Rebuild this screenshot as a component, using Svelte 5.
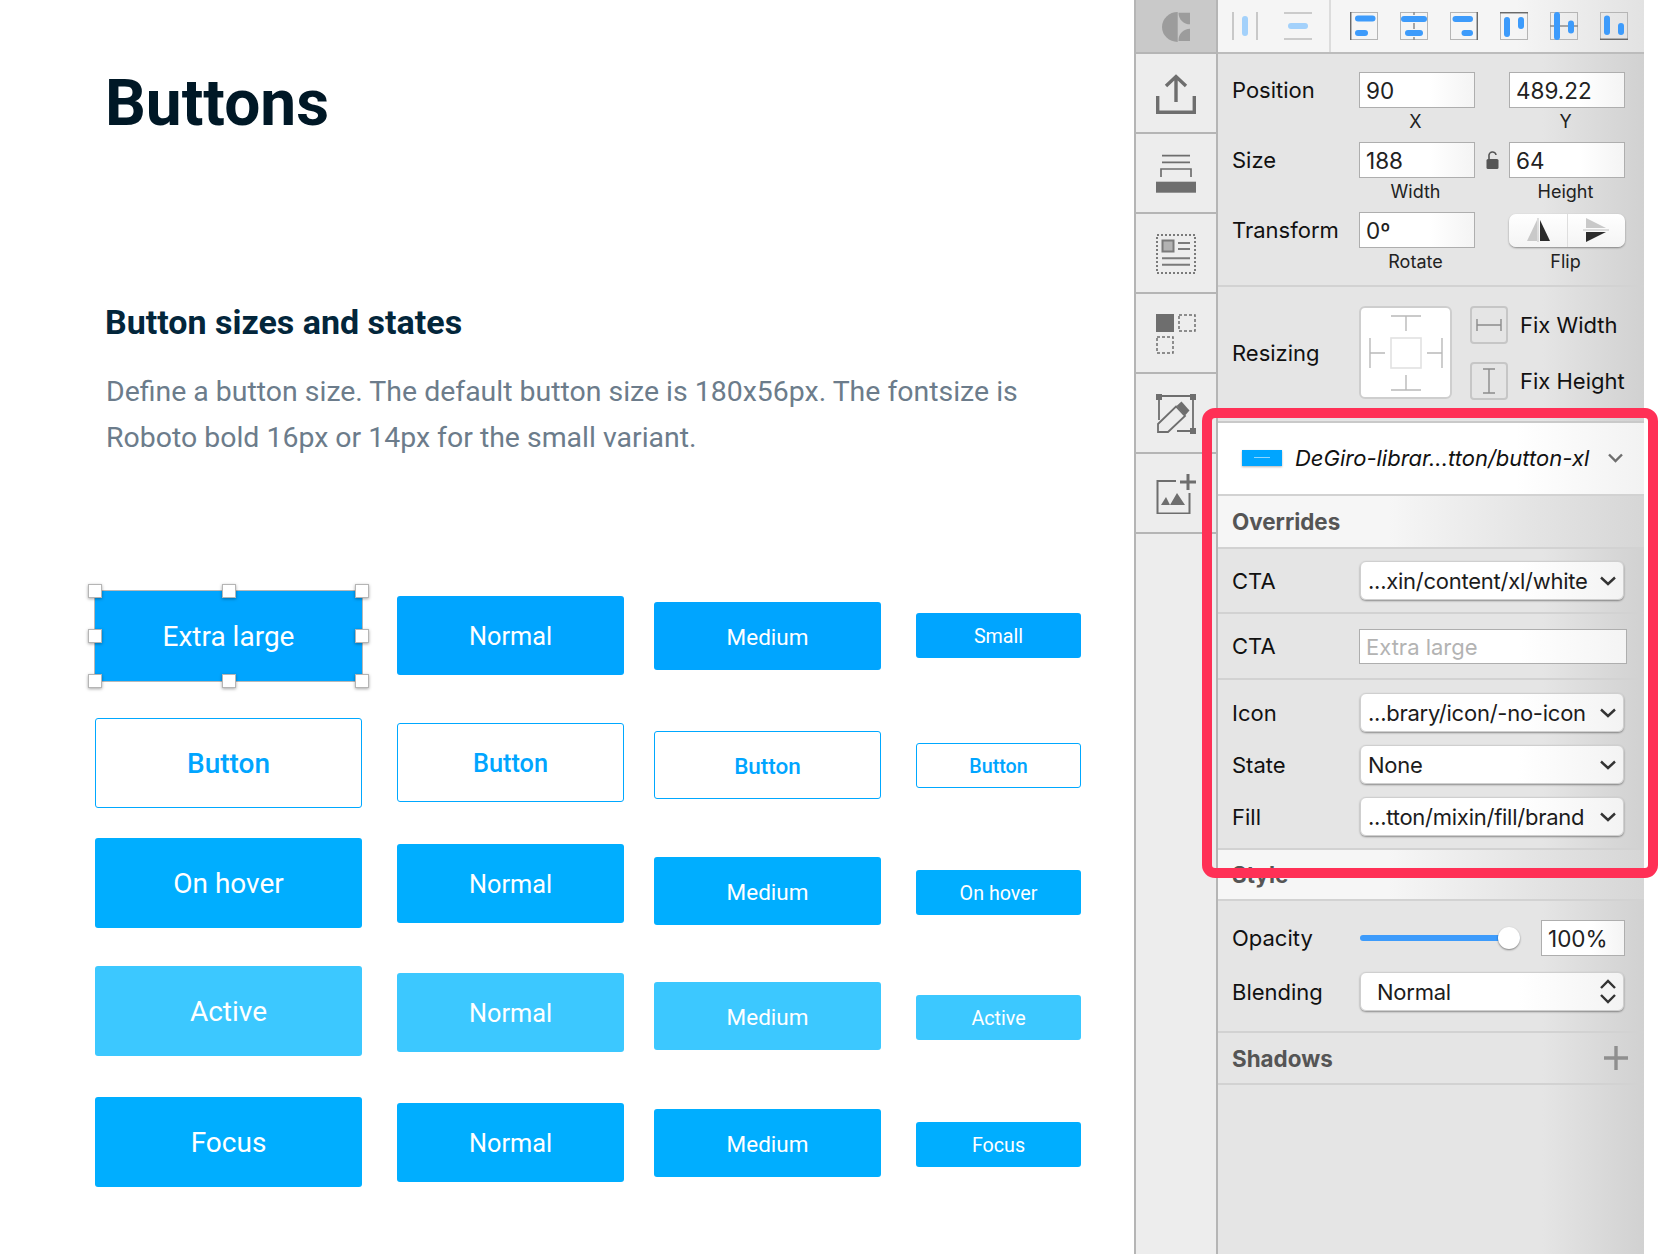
<script>
  // top of every button on the page, per column; rows are not evenly spaced in the design file
  const startY = 591;
  const columns = [
    { x: 95, w: 267, h: 90, size: 28, tops: [591, 718, 838, 966, 1097], labels: ['Extra large', 'Button', 'On hover', 'Active', 'Focus'] },
    { x: 35, w: 227, h: 79, size: 25.3, tops: [596, 723, 844, 973, 1103], labels: ['Normal', 'Button', 'Normal', 'Normal', 'Normal'] },
    { x: 30, w: 227, h: 68, size: 22.5, tops: [602, 731, 857, 982, 1109], labels: ['Medium', 'Button', 'Medium', 'Medium', 'Medium'] },
    { x: 35, w: 165, h: 45, size: 19.7, tops: [613, 743, 870, 995, 1122], labels: ['Small', 'Button', 'On hover', 'Active', 'Focus'] }
  ];
  const states = ['brand', 'outline', 'hover', 'active', 'hover'];
  const handles = ['tl', 'tc', 'tr', 'ml', 'mr', 'bl', 'bc', 'br'];

  function gap(col, i) {
    return i === 0 ? col.tops[0] - startY : col.tops[i] - col.tops[i - 1] - col.h;
  }

  const aligns = [
    { edge: 'M0.7 0V28', dark: true, bars: [[5, 3.5, 20.5, 6], [5, 18, 13, 6]] },
    { edge: 'M14 0V3M14 11V17M14 25V28', dark: false, bars: [[1, 4, 26, 6], [5, 18, 18, 6]] },
    { edge: 'M27.3 0V28', dark: true, bars: [[2.5, 4, 20.5, 6], [11.5, 18, 11.5, 6]] },
    { edge: 'M0 0.7H28', dark: true, bars: [[4, 5, 6, 20], [18, 5, 6, 12]] },
    { edge: 'M0 14H4M10 14H18M24 14H28', dark: false, bars: [[4, 0, 6, 28], [18, 8.5, 6, 13]] },
    { edge: 'M0 27.3H28', dark: true, bars: [[4, 3.5, 6, 19.5], [18, 11, 6, 12]] }
  ];
</script>

<div class="page">
  <main class="doc">
    <h1>Buttons</h1>
    <h2>Button sizes and states</h2>
    <p>Define a button size. The default button size is 180x56px. The fontsize is<br />Roboto bold 16px or 14px for the small variant.</p>

    <div class="board">
      {#each columns as col, c}
        <div class="col" style="width:{col.w}px;margin-left:{col.x}px">
          {#each col.labels as label, i}
            <div
              class="btn {states[i]}"
              class:selected={c === 0 && i === 0}
              style="height:{col.h}px;margin-top:{gap(col, i)}px;font-size:{col.size}px"
            >
              {label}
              {#if c === 0 && i === 0}
                {#each handles as h}
                  <span class="handle {h}"></span>
                {/each}
              {/if}
            </div>
          {/each}
        </div>
      {/each}
    </div>
  </main>

  <nav class="rail">
    <div class="rail-item logo">
      <svg width="28" height="30" viewBox="0 0 28 30" fill="#9c9c9c">
        <path d="M15.7 0A15.7 15 0 0 0 15.7 30Z" />
        <path d="M16.5 0.7H28V12.3A11.5 11.5 0 0 1 16.5 0.7Z" />
        <path d="M16.5 28.6A11.5 11.5 0 0 1 28 16.7V29H16.5Z" />
      </svg>
    </div>
    <div class="rail-item">
      <svg width="40" height="40" viewBox="0 0 40 40" fill="none" stroke="#6e6e6e" stroke-width="3.4">
        <path d="M1.7 22V38.3H38.3V22" />
        <path d="M20 28V2.5M10 12L20 2.5L30 12" />
      </svg>
    </div>
    <div class="rail-item">
      <svg width="40" height="40" viewBox="0 0 40 40" fill="none" stroke="#6e6e6e" stroke-width="1.7">
        <path d="M6 1.7H34M6 8.3H34" />
        <path d="M5 23V15H35V23" />
        <rect x="0" y="27.7" width="40" height="11" fill="#6e6e6e" stroke="none" />
      </svg>
    </div>
    <div class="rail-item">
      <svg width="40" height="40" viewBox="0 0 40 40" fill="none" stroke="#7a7a7a" stroke-width="2">
        <rect x="1" y="1" width="38" height="38" stroke-dasharray="2 2" />
        <rect x="6.5" y="6.5" width="11" height="11" fill="#b3b3b3" />
        <path d="M22 9H34M22 15H34M6 24.3H34M6 30.7H34" />
      </svg>
    </div>
    <div class="rail-item">
      <svg width="40" height="40" viewBox="0 0 40 40" fill="none" stroke="#6e6e6e" stroke-width="1.5">
        <rect x="0" y="0" width="18" height="18" fill="#6e6e6e" stroke="none" />
        <rect x="23" y="1" width="16" height="16" stroke-dasharray="3 2" />
        <rect x="1" y="23" width="16" height="16" stroke-dasharray="3 2" />
      </svg>
    </div>
    <div class="rail-item">
      <svg width="40" height="40" viewBox="0 0 40 40" fill="none" stroke="#6e6e6e" stroke-width="1.8">
        <path d="M3 4V26M3 2H37V37H21" />
        <rect x="0" y="0" width="6" height="6" fill="#6e6e6e" stroke="none" />
        <rect x="34" y="0" width="6" height="6" fill="#6e6e6e" stroke="none" />
        <rect x="34" y="34" width="6" height="6" fill="#6e6e6e" stroke="none" />
        <path d="M2 38V30L20 12.5L29 22L12 38Z" fill="#ededed" />
        <path d="M20.5 12L25.5 7.5L33.5 16.5L29 21.5Z" fill="#6e6e6e" stroke="none" />
      </svg>
    </div>
    <div class="rail-item">
      <svg width="40" height="40" viewBox="0 0 40 40" fill="none" stroke="#6e6e6e" stroke-width="2">
        <path d="M20 7H1.5V39.5H33.5V19" />
        <path d="M32 0V16M24 8H40" stroke-width="3" />
        <path d="M5 31L10 23L14 31ZM14 31L21 19L29 31Z" fill="#6e6e6e" stroke="none" />
      </svg>
    </div>
    <div class="rail-rest"></div>
  </nav>

  <aside class="panel">
    <div class="toolbar">
      <div class="tool-group first">
        <svg width="26" height="28" viewBox="0 0 26 28">
          <path d="M1 0V28M25 0V28" stroke="#bdbdbd" stroke-width="1.6" />
          <rect x="10" y="4" width="6" height="20" rx="3" fill="#a3d1fb" />
        </svg>
        <svg width="28" height="28" viewBox="0 0 28 28">
          <path d="M0 1H28M0 27H28" stroke="#bdbdbd" stroke-width="1.6" />
          <rect x="4" y="11" width="20" height="6" rx="3" fill="#a3d1fb" />
        </svg>
      </div>
      <div class="tool-group">
        {#each aligns as a}
          <svg width="28" height="28" viewBox="0 0 28 28">
            <rect x="0.5" y="0.5" width="27" height="27" fill="none" stroke="#b5b5b5" />
            <path d={a.edge} stroke={a.dark ? '#6a6a6a' : '#8c8c8c'} stroke-width="1.5" />
            {#each a.bars as b}
              <rect x={b[0]} y={b[1]} width={b[2]} height={b[3]} rx="3" fill="#3d9bfb" />
            {/each}
          </svg>
        {/each}
      </div>
    </div>

    <section class="geometry">
      <span class="lbl">Position</span>
      <span class="field">90</span>
      <span></span>
      <span class="field">489.22</span>
      <span></span><span class="cap">X</span><span></span><span class="cap">Y</span>

      <span class="lbl">Size</span>
      <span class="field">188</span>
      <svg class="lock" width="13" height="19" viewBox="0 0 13 19">
        <path d="M3 9V5A3.5 3.5 0 0 1 10 4" fill="none" stroke="#555" stroke-width="1.6" />
        <rect x="0.5" y="8" width="12" height="10" rx="1.5" fill="#555" />
      </svg>
      <span class="field">64</span>
      <span></span><span class="cap">Width</span><span></span><span class="cap">Height</span>

      <span class="lbl">Transform</span>
      <span class="field">0º</span>
      <span></span>
      <div class="flip">
        <span class="flip-half">
          <svg width="28" height="28" viewBox="0 0 28 28">
            <path d="M13 4L3 25H13Z" fill="#c9c9c9" />
            <path d="M14 2V26" stroke="#c9c9c9" stroke-width="1.2" />
            <path d="M16 4V25H26Z" fill="#2b2b2b" />
          </svg>
        </span>
        <span class="flip-half">
          <svg width="28" height="28" viewBox="0 0 28 28">
            <path d="M4 2V12H24Z" fill="#c9c9c9" />
            <path d="M1 14H27" stroke="#c9c9c9" stroke-width="1.2" />
            <path d="M4 16V26L24 16Z" fill="#2b2b2b" />
          </svg>
        </span>
      </div>
      <span></span><span class="cap">Rotate</span><span></span><span class="cap">Flip</span>
    </section>

    <section class="resizing">
      <span class="lbl">Resizing</span>
      <div class="pins">
        <svg width="74" height="76" viewBox="0 0 74 76" fill="none" stroke="#b9b9b9" stroke-width="1.4">
          <path d="M22 1H52M37 1V16M22 75H52M37 60V75M1 23V53M1 38H16M73 23V53M58 38H73" />
          <rect x="22" y="23" width="30" height="30" fill="#fff" stroke="#e2e2e2" stroke-width="1.6" />
        </svg>
      </div>
      <div class="fixes">
        <div class="fix">
          <span class="fix-btn">
            <svg width="26" height="14" viewBox="0 0 26 14" fill="none" stroke="#8c8c8c" stroke-width="1.4"><path d="M1 1V13M25 1V13M1 7H25" /></svg>
          </span>
          Fix Width
        </div>
        <div class="fix">
          <span class="fix-btn">
            <svg width="14" height="26" viewBox="0 0 14 26" fill="none" stroke="#8c8c8c" stroke-width="1.4"><path d="M1 1H13M1 25H13M7 1V25" /></svg>
          </span>
          Fix Height
        </div>
      </div>
    </section>

    <section class="symbol">
      <span class="swatch"><i></i></span>
      <span class="symbol-name">DeGiro-librar...tton/button-xl</span>
      <svg width="15" height="10" viewBox="0 0 15 10" fill="none" stroke="#6e6e6e" stroke-width="2.4"><path d="M1 1.5L7.5 8L14 1.5" /></svg>
    </section>

    <header class="sec-head overrides"><span>Overrides</span></header>

    <section class="row-cta">
      <span class="lbl">CTA</span>
      <div class="select">...xin/content/xl/white
        <svg width="16" height="10" viewBox="0 0 16 10" fill="none" stroke="#333" stroke-width="2.4"><path d="M1 1.5L8 8L15 1.5" /></svg>
      </div>
    </section>
    <section class="row-text">
      <span class="lbl">CTA</span>
      <span class="field wide">Extra large</span>
    </section>
    <section class="row-list">
      <div class="line">
        <span class="lbl">Icon</span>
        <div class="select">...brary/icon/-no-icon
          <svg width="16" height="10" viewBox="0 0 16 10" fill="none" stroke="#333" stroke-width="2.4"><path d="M1 1.5L8 8L15 1.5" /></svg>
        </div>
      </div>
      <div class="line">
        <span class="lbl">State</span>
        <div class="select">None
          <svg width="16" height="10" viewBox="0 0 16 10" fill="none" stroke="#333" stroke-width="2.4"><path d="M1 1.5L8 8L15 1.5" /></svg>
        </div>
      </div>
      <div class="line">
        <span class="lbl">Fill</span>
        <div class="select">...tton/mixin/fill/brand
          <svg width="16" height="10" viewBox="0 0 16 10" fill="none" stroke="#333" stroke-width="2.4"><path d="M1 1.5L8 8L15 1.5" /></svg>
        </div>
      </div>
    </section>

    <header class="sec-head style"><span>Style</span></header>

    <section class="appearance">
      <div class="line opacity">
        <span class="lbl">Opacity</span>
        <div class="slider"><span class="thumb"></span></div>
        <span class="field small">100%</span>
      </div>
      <div class="line">
        <span class="lbl">Blending</span>
        <div class="select blend">Normal
          <svg width="16" height="27" viewBox="0 0 16 27" fill="none" stroke="#333" stroke-width="2.4"><path d="M1 10L8 3L15 10M1 17L8 24L15 17" /></svg>
        </div>
      </div>
    </section>

    <header class="sec-head shadows">
      <span>Shadows</span>
      <svg width="24" height="24" viewBox="0 0 24 24" stroke="#8f8f8f" stroke-width="3.4"><path d="M12 0V24M0 12H24" /></svg>
    </header>
  </aside>

  <div class="margin"></div>

  <div class="callout"></div>
</div>

<style>
  :global(body) {
    margin: 0;
    background: #fff;
  }
  .page {
    position: relative;
    display: flex;
    width: 1658px;
    height: 1254px;
    overflow: hidden;
    font-family: Roboto, sans-serif;
  }

  /* document side */
  .doc {
    width: 1134px;
    flex: none;
    box-sizing: border-box;
  }
  h1 {
    margin: 63px 0 0 105px;
    font-size: 64px;
    line-height: 82px;
    font-weight: 700;
    color: #001826;
  }
  h2 {
    margin: 152px 0 0 105px;
    font-size: 34px;
    line-height: 50px;
    font-weight: 700;
    color: #03263b;
  }
  p {
    margin: 22px 0 0 106px;
    font-size: 28.45px;
    line-height: 46px;
    color: #6c7c8b;
  }
  .board {
    display: flex;
    margin-top: 130px;
  }
  .col {
    display: flex;
    flex-direction: column;
    flex: none;
  }
  .btn {
    position: relative;
    display: flex;
    align-items: center;
    justify-content: center;
    flex: none;
    box-sizing: border-box;
    padding-top: 1px;
    border-radius: 3px;
    color: #fff;
  }
  .brand { background: #00a5ff; }
  .hover { background: #00aeff; }
  .active { background: #3cc8ff; }
  .outline {
    background: #fff;
    border: 1.5px solid #00a8ff;
    color: #00a5ff;
    font-weight: 500;
  }
  .selected {
    border-radius: 0;
    outline: 1px solid #b8b8b8;
  }
  .handle {
    position: absolute;
    width: 12px;
    height: 12px;
    background: #fff;
    border: 1px solid #b5b5b5;
    box-shadow: 0 1px 3px rgba(0, 0, 0, 0.35);
  }
  .tl, .tc, .tr { top: -7px; }
  .ml, .mr { top: 38px; }
  .bl, .bc, .br { bottom: -7px; }
  .tl, .ml, .bl { left: -7px; }
  .tc, .bc { left: 127px; }
  .tr, .mr, .br { right: -7px; }

  /* tool rail */
  .rail {
    width: 84px;
    flex: none;
    box-sizing: border-box;
    display: flex;
    flex-direction: column;
    background: #ededed;
    border-left: 2px solid #b5b5b5;
    border-right: 2px solid #b5b5b5;
  }
  .rail-item {
    height: 78px;
    flex: none;
    display: flex;
    align-items: center;
    justify-content: center;
    box-sizing: content-box;
    border-bottom: 2px solid #b5b5b5;
  }
  .rail-item svg {
    position: relative;
    top: 1px;
  }
  .logo {
    height: 52px;
    background: #c9c9c9;
  }

  /* inspector */
  .panel {
    position: relative;
    width: 426px;
    flex: none;
    background: linear-gradient(90deg, #e5e5e5 76%, #d1d1d1 100%);
    font-family: Inter, "Liberation Sans", sans-serif;
    font-size: 22px;
    color: #111;
  }
  .toolbar {
    display: flex;
    height: 52px;
    border-bottom: 2px solid #bcbcbc;
    background: linear-gradient(90deg, #f5f5f5 70%, #e2e2e2 100%);
  }
  .tool-group {
    display: flex;
    align-items: center;
    gap: 22px;
    padding-left: 19px;
  }
  .tool-group.first {
    width: 113px;
    box-sizing: border-box;
    gap: 26px;
    padding-left: 14px;
    flex: none;
    border-right: 2px solid #dcdcdc;
  }
  .lbl {
    font-size: 22px;
    color: #111;
  }
  .field {
    display: block;
    box-sizing: border-box;
    height: 36px;
    padding-left: 6px;
    line-height: 35px;
    font-size: 22.5px;
    background: linear-gradient(90deg, #fff 60%, #f4f4f4 100%);
    border: 1px solid #aeaeae;
    color: #222;
  }
  .geometry {
    display: grid;
    grid-template-columns: 127px 116px 34px 116px;
    grid-auto-rows: 36px 34px;
    align-items: center;
    padding: 18px 0 0 14px;
    box-sizing: border-box;
    border-bottom: 2px solid #d2d2d2;
    height: 233px;
  }
  .cap {
    align-self: start;
    padding-right: 3px;
    line-height: 28px;
    text-align: center;
    font-size: 18px;
    color: #222;
  }
  .lock {
    justify-self: center;
  }
  .flip {
    display: flex;
    align-items: center;
    height: 33px;
    background: linear-gradient(#fff, #f4f4f4);
    border-radius: 7px;
    box-shadow: 0 1px 2px rgba(0, 0, 0, 0.4);
  }
  .flip-half {
    flex: 1;
    display: flex;
    align-items: center;
    justify-content: center;
    height: 100%;
  }
  .flip-half:first-child {
    border-right: 1px solid #dedede;
  }
  .resizing {
    display: flex;
    align-items: center;
    height: 134px;
    padding: 0 0 3px 14px;
    box-sizing: border-box;
  }
  .resizing .lbl {
    width: 127px;
  }
  .pins {
    display: flex;
    align-items: center;
    justify-content: center;
    width: 93px;
    height: 93px;
    box-sizing: border-box;
    background: #fff;
    border: 2px solid #cecece;
    border-radius: 6px;
  }
  .fixes {
    display: flex;
    flex-direction: column;
    gap: 18px;
    margin-left: 18px;
  }
  .fix {
    display: flex;
    align-items: center;
    gap: 12px;
    font-size: 22px;
    white-space: nowrap;
  }
  .fix-btn {
    display: flex;
    align-items: center;
    justify-content: center;
    width: 38px;
    height: 38px;
    box-sizing: border-box;
    border: 2px solid #c6c6c6;
    border-radius: 4px;
  }
  .symbol {
    display: flex;
    align-items: center;
    height: 75px;
    padding: 0 0 2px 24px;
    box-sizing: border-box;
    background: linear-gradient(90deg, #fff 70%, #f2f2f2 100%);
    border-top: 2px solid #c9c9c9;
    border-bottom: 2px solid #d2d2d2;
  }
  .swatch {
    display: flex;
    align-items: center;
    justify-content: center;
    width: 40px;
    height: 16px;
    background: #00a5ff;
    box-shadow: 0 1px 2px rgba(0, 0, 0, 0.3);
  }
  .swatch i {
    width: 16px;
    height: 1px;
    background: #8fd6ff;
  }
  .symbol-name {
    margin-left: 13px;
    width: 313px;
    font-size: 22px;
    font-style: italic;
    white-space: nowrap;
  }
  .sec-head {
    display: flex;
    align-items: center;
    justify-content: space-between;
    box-sizing: border-box;
    padding: 0 16px 0 14px;
    font-size: 22.4px;
    font-weight: 700;
    color: #555;
    border-bottom: 2px solid #d2d2d2;
  }
  .overrides {
    height: 53px;
    background: linear-gradient(90deg, #f6f6f6 40%, #d6d6d6 100%);
  }
  .style {
    height: 51px;
    background: linear-gradient(90deg, #f6f6f6 40%, #d6d6d6 100%);
  }
  .shadows {
    height: 52px;
  }
  .select {
    display: flex;
    align-items: center;
    justify-content: space-between;
    box-sizing: border-box;
    width: 264px;
    height: 39px;
    margin-left: 1px;
    padding: 0 7px 0 7px;
    background: linear-gradient(90deg, #fff 60%, #f3f3f3 100%);
    border: 1px solid #cfcfcf;
    border-radius: 6px;
    box-shadow: 0 1px 2px rgba(0, 0, 0, 0.4);
    font-size: 22px;
    letter-spacing: -0.25px;
    color: #1c1c1c;
    white-space: nowrap;
  }
  .row-cta, .row-text {
    display: flex;
    align-items: center;
    padding-left: 14px;
    box-sizing: border-box;
    border-bottom: 2px solid #d2d2d2;
  }
  .row-cta .lbl, .row-text .lbl, .line .lbl {
    width: 127px;
    flex: none;
  }
  .row-cta {
    height: 65px;
  }
  .row-text {
    height: 66px;
  }
  .wide {
    width: 268px;
    height: 35px;
    font-size: 22px;
    color: #b3b3b3;
  }
  .row-list {
    height: 170px;
    padding: 13px 0 0 14px;
    box-sizing: border-box;
    display: flex;
    flex-direction: column;
    gap: 13px;
    border-bottom: 2px solid #d2d2d2;
  }
  .line {
    display: flex;
    align-items: center;
  }
  .appearance {
    height: 132px;
    padding: 19px 0 0 14px;
    box-sizing: border-box;
    display: flex;
    flex-direction: column;
    gap: 16px;
    border-bottom: 2px solid #d2d2d2;
  }
  .opacity {
    height: 36px;
  }
  .slider {
    position: relative;
    width: 160px;
    height: 6px;
    margin-left: 1px;
    border-radius: 3px;
    background: #3d9bfb;
    flex: none;
  }
  .thumb {
    position: absolute;
    right: 0;
    top: -8px;
    width: 22px;
    height: 22px;
    border-radius: 50%;
    background: #fff;
    box-shadow: 0 1px 2px rgba(0, 0, 0, 0.45);
  }
  .small {
    width: 84px;
    height: 36px;
    margin-left: 21px;
    padding-left: 6px;
  }
  .blend {
    padding-left: 16px;
  }
  .margin {
    flex: 1;
    background: #fff;
  }

  /* red highlight drawn over the screenshot */
  .callout {
    position: absolute;
    left: 1202px;
    top: 408px;
    width: 456px;
    height: 470px;
    box-sizing: border-box;
    border: 10px solid #ff3056;
    border-radius: 13px;
    pointer-events: none;
  }
</style>
